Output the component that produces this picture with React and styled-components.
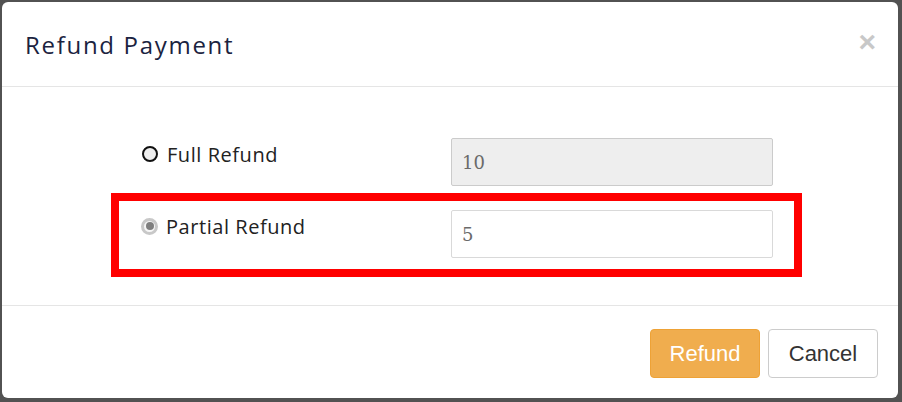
import React from 'react';
import styled, { createGlobalStyle } from 'styled-components';

const GlobalStyle = createGlobalStyle`
  html, body {
    margin: 0;
    padding: 0;
    background: #525252;
  }
  body {
    padding: 2px 4px 4px 2px;
    font-family: "Open Sans", "Liberation Sans", sans-serif;
  }
`;

const Modal = styled.div`
  width: 896px;
  height: 396px;
  background: white;
  border-radius: 6px;
  display: flex;
  flex-direction: column;
  overflow: hidden;
`;

const Header = styled.div`
  height: 85px;
  border-bottom: 1px solid #e5e5e5;
  display: flex;
  align-items: center;
  justify-content: space-between;
  padding: 0 22px 0 23px;
  box-sizing: border-box;
`;

const Title = styled.h4`
  margin: 0;
  font-size: 24px;
  font-weight: 400;
  color: #1b2340;
  letter-spacing: 1.7px;
`;

const Close = styled.button`
  border: 0;
  background: none;
  padding: 0;
  font-family: "Liberation Sans", sans-serif;
  font-size: 30px;
  font-weight: 700;
  color: #c8c8c8;
  line-height: 1;
  margin-top: -5px;
  cursor: pointer;
`;

const Body = styled.div`
  height: 219px;
  border-bottom: 1px solid #e5e5e5;
  box-sizing: border-box;
  padding: 51px 0 0 140px;
  display: flex;
  flex-direction: column;
  gap: 24px;
`;

const Row = styled.div`
  position: relative;
  align-self: flex-start;
  display: grid;
  grid-template-columns: 309px 322px;
  align-items: start;
`;

const Highlight = styled.div`
  position: absolute;
  top: -17px;
  bottom: -19px;
  left: -31px;
  right: -29px;
  border: 8px solid #ff0000;
  pointer-events: none;
`;

const Choice = styled.label`
  display: flex;
  align-items: center;
  gap: 8px;
  height: 32px;
  font-size: 20px;
  letter-spacing: 0.55px;
  color: #222;
`;

const Radio = styled.span`
  width: ${p => (p.checked ? 17 : 16)}px;
  height: ${p => (p.checked ? 17 : 16)}px;
  margin-left: ${p => (p.checked ? -1 : 0)}px;
  margin-right: ${p => (p.checked ? 0 : 1)}px;
  border-radius: 50%;
  box-sizing: border-box;
  border: ${p => (p.checked ? '3px solid #c8c8c8' : '2px solid #111')};
  background: ${p => (p.checked ? '#f6f6f6' : '#eeeeee')};
  display: flex;
  align-items: center;
  justify-content: center;
  &::after {
    content: '';
    display: ${p => (p.checked ? 'block' : 'none')};
    width: 8px;
    height: 8px;
    border-radius: 50%;
    background: #7f7f7f;
  }
`;

const Input = styled.input`
  height: 48px;
  box-sizing: border-box;
  border: 1px solid ${p => (p.disabled ? '#cbcbcb' : '#d9d9d9')};
  border-radius: 2px;
  background: ${p => (p.disabled ? '#eeeeee' : '#ffffff')};
  padding: 0 10px;
  font-family: "DejaVu Serif", serif;
  font-size: 18px;
  color: #6a6a6a;
  outline: none;
  &:disabled {
    color: #6a6a6a;
    -webkit-text-fill-color: #6a6a6a;
  }
`;

const Footer = styled.div`
  flex: 1;
  display: flex;
  justify-content: flex-end;
  align-items: flex-start;
  gap: 8px;
  padding: 23px 20px 0 0;
`;

const Button = styled.button`
  height: 49px;
  width: ${p => p.w}px;
  border-radius: 4px;
  font-family: "Liberation Sans", Arial, sans-serif;
  font-size: 22px;
  border: 1px solid ${p => (p.primary ? '#eea236' : '#cccccc')};
  background: ${p => (p.primary ? '#f0ad4e' : '#ffffff')};
  color: ${p => (p.primary ? '#ffffff' : '#333333')};
  cursor: pointer;
`;

export default function App() {
  return (
    <>
      <GlobalStyle />
      <Modal>
        <Header>
          <Title>Refund Payment</Title>
          <Close>×</Close>
        </Header>
        <Body>
          <Row>
            <Choice>
              <Radio />
              Full Refund
            </Choice>
            <Input disabled value="10" readOnly />
          </Row>
          <Row>
            <Highlight />
            <Choice>
              <Radio checked />
              Partial Refund
            </Choice>
            <Input defaultValue="5" />
          </Row>
        </Body>
        <Footer>
          <Button primary w={110}>Refund</Button>
          <Button w={110}>Cancel</Button>
        </Footer>
      </Modal>
    </>
  );
}
